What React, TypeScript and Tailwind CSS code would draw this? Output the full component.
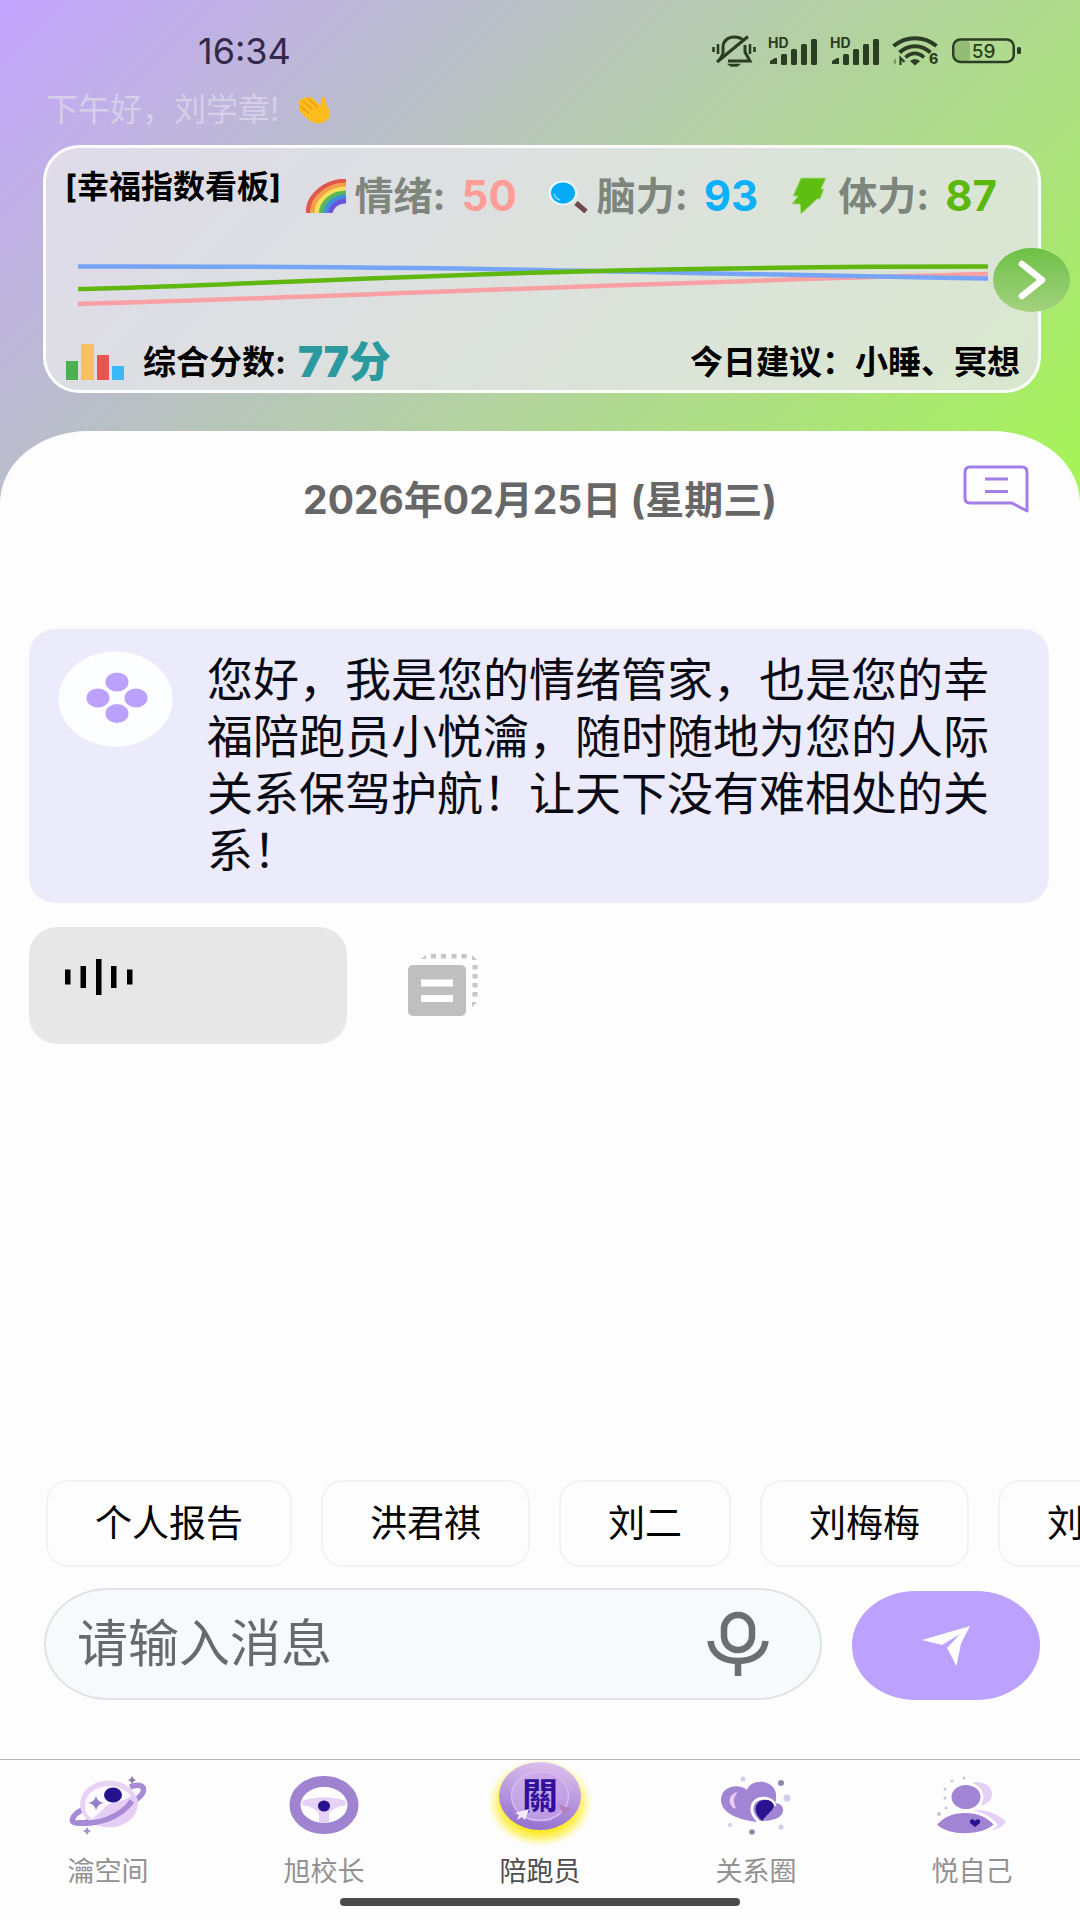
import React from "react";

const DARK = "#2b3d22";

/* ---------- status bar ---------- */

function MutedBell() {
  return (
    <svg className="h-8 w-11" viewBox="0 0 44 32" fill="none" stroke={DARK} strokeWidth="3" aria-hidden="true">
      <path d="M11 19V12C11 6 16 2 22 2c4 0 7 1 9 3M33 10v7l5 9H16" />
      <path d="M5 27 36 1.500" strokeWidth="3.200" />
      <path d="M11 19 7.500 25" />
      <path d="M17 29.500h10l-2 1.500h-6z" fill={DARK} strokeWidth="1.500" />
      <path d="M1.500 12v5M6 9v10M38 9v10M42.500 12v5" strokeWidth="2.600" />
    </svg>
  );
}

function Signal() {
  return (
    <svg className="h-9 w-[50px] overflow-visible" viewBox="0 -2 50 36" fill={DARK} aria-hidden="true">
      <path d="M2 29v-3l5-3h2v6z" />
      <rect x="13" y="19" width="6" height="11" rx="1.500" />
      <rect x="23" y="14" width="6" height="16" rx="1.500" />
      <rect x="33" y="9" width="6" height="21" rx="1.500" />
      <rect x="43" y="4" width="6" height="26" rx="1.500" />
      <text x="0" y="13" fontSize="14" fontWeight="700" fontFamily="Inter, sans-serif">HD</text>
    </svg>
  );
}

function Wifi() {
  return (
    <svg className="h-8 w-12" viewBox="0 0 48 32" fill="none" stroke={DARK} aria-hidden="true">
      <path d="M1.500 11C14 .500 32 .500 44.500 11" strokeWidth="4" />
      <path d="M7.500 17.500c9-8.500 22-8.500 31 0" strokeWidth="4" />
      <path d="M13.500 22.500c5.500-5.500 13-5.500 18.500 0" strokeWidth="3.600" />
      <path d="M18 26c3-2.500 7-2.500 10 0l-5 4.500z" fill={DARK} stroke="none" />
      <path d="M4 23v7l-3-3z" fill="#7f9b6b" stroke="none" />
      <path d="M8.500 30v-7l4 4" strokeWidth="2.200" />
      <text x="37" y="29" fontSize="14" fontWeight="800" fontFamily="Inter, sans-serif" fill={DARK} stroke="none">6</text>
    </svg>
  );
}

function Battery() {
  return (
    <svg className="h-8 w-[70px]" viewBox="0 0 70 32" aria-hidden="true">
      <rect x="3" y="6" width="15" height="20" rx="4" fill="#93bd74" />
      <rect x="1.250" y="4.500" width="60.500" height="22.500" rx="7" fill="none" stroke={DARK} strokeWidth="2.500" />
      <rect x="65" y="12" width="4" height="7" rx="1.500" fill={DARK} />
      <text x="31.500" y="22.500" fontSize="19" fontWeight="500" textAnchor="middle" fontFamily="Inter, sans-serif" fill={DARK}>59</text>
    </svg>
  );
}

function StatusBar() {
  return (
    <div className="flex h-[84px] items-center justify-between pt-[18px] pr-[58px] pl-[198px]">
      <time className="text-[36px] leading-10 text-[#33294a]">16:34</time>
      <div className="flex items-center gap-3">
        <MutedBell />
        <Signal />
        <Signal />
        <Wifi />
        <Battery />
      </div>
    </div>
  );
}

/* ---------- dashboard card ---------- */

function WavingHand() {
  return (
    <svg className="h-7 w-[34px]" viewBox="0 0 34 28" aria-hidden="true">
      <path
        d="M2 4.500C3.500 3 5 3.500 6 5L5 3.500C6 1 9 .500 11 2.500c.500-2 3.500-2 5 0l7.500 7.500.500-7c.500-2.500 4-2.500 4.500 0l1 5.500c.500 3 4 6 3.500 9.500-.500 5-6 9.500-12 9.500C13 27.500 4 17 2 13.500c-1-2 0-3.500 1.500-3.500L1.500 7.500c-.500-1 0-2 .500-3z"
        fill="#fcbc1c"
      />
      <path d="M6 5l9 8M11 2.500l9 8M3.500 10l8 7" stroke="#e59a12" strokeWidth="1.200" fill="none" strokeLinecap="round" />
    </svg>
  );
}

function Rainbow() {
  const bands = ["#e2574c", "#f6a04d", "#f8e05a", "#57b85a", "#3f8fe0", "#6a55d8"];
  return (
    <svg className="h-[34px] w-10" viewBox="0 0 40 34" fill="none" aria-hidden="true">
      {bands.map((c, i) => (
        <path
          key={c}
          d={`M${2 + i * 4.4} 34C${2 + i * 4.6} ${16 + i * 2.4} ${20 + i * 2.2} ${2 + i * 4} 40 ${2 + i * 4}`}
          stroke={c}
          strokeWidth="4.800"
        />
      ))}
    </svg>
  );
}

function Magnifier() {
  return (
    <svg className="h-[34px] w-10" viewBox="0 0 40 34" aria-hidden="true">
      <path d="M28 24l10 8.500" stroke="#6b4a48" strokeWidth="5" />
      <ellipse cx="15" cy="14" rx="14.500" ry="12.500" fill="#e8f8ff" />
      <ellipse cx="15" cy="14" rx="12" ry="10.500" fill="#03aaf8" />
      <path d="M6 15c1 3 3 5 6 6" stroke="#8bdcff" strokeWidth="1.500" fill="none" />
    </svg>
  );
}

function Bolt() {
  return (
    <svg className="h-[38px] w-10" viewBox="0 0 40 38" aria-hidden="true">
      <path d="M12 1h25l-5 11h3l-4 10h-3L12 37l-1-10H3l6-8H4z" fill="#5fbe12" stroke="#a5dc7c" strokeWidth="1" strokeLinejoin="round" />
    </svg>
  );
}

const metrics = [
  { icon: <Rainbow />, label: "情绪:", value: 50, color: "text-[#ff9d99]" },
  { icon: <Magnifier />, label: "脑力:", value: 93, color: "text-[#0db1fb]" },
  { icon: <Bolt />, label: "体力:", value: 87, color: "text-[#5cb80e]" },
];

function TrendChart() {
  return (
    <svg className="mt-[39px] h-[54px] w-full" viewBox="0 0 910 54" preserveAspectRatio="none" fill="none" strokeWidth="4.500" role="img" aria-label="趋势">
      <path d="M0 47C200 42 600 24 910 17" stroke="#f8a0a4" />
      <path d="M0 9.500C350 9 500 14 700 17.500S850 21 910 21.500" stroke="#76a4f6" />
      <path d="M0 32C200 28 420 9.500 910 9.500" stroke="#60b70f" />
    </svg>
  );
}

function Dashboard() {
  return (
    <section className="relative mt-[15px] mr-[39px] ml-[43px] h-[248px] rounded-[36px] border-[3px] border-white/90 bg-[#e6e6ea]/80 text-black">
      <div className="flex items-start justify-between pr-[41px] pl-[19px]">
        <h2 className="mt-[19px] text-[32px] leading-10 font-bold whitespace-nowrap">[幸福指数看板]</h2>
        <dl className="mt-[26px] flex gap-[31px] leading-[44px]">
          {metrics.map((m) => (
            <div key={m.label} className="flex items-center">
              {m.icon}
              <dt className="ml-[9px] text-[39px] font-bold text-[#7d857c]">{m.label}</dt>
              <dd className={`ml-4 text-[42px] font-bold ${m.color}`}>{m.value}</dd>
            </div>
          ))}
        </dl>
      </div>
      <div className="pr-[50px] pl-8">
        <TrendChart />
      </div>
      <div className="absolute inset-x-0 bottom-1 flex items-center pr-[18px] pl-5 text-[33px] leading-[48px] font-bold">
        <svg className="h-9 w-[60px]" viewBox="0 0 60 36" aria-hidden="true">
          <rect x="0" y="17" width="12" height="19" fill="#4caf50" />
          <rect x="15" y="0" width="13" height="36" fill="#f8c060" />
          <rect x="31" y="11" width="12" height="25" fill="#e55751" />
          <rect x="46" y="22" width="12" height="14" fill="#3bb9f8" />
        </svg>
        <span className="ml-[17px]">综合分数:</span>
        <strong className="ml-3 text-[42px] text-[#2b9a9f]">77分</strong>
        <span className="ml-auto">今日建议：小睡、冥想</span>
      </div>
      <button
        type="button"
        aria-label="查看详情"
        className="absolute top-[100px] -right-8 flex h-16 w-[77px] items-center justify-center rounded-[50%] bg-linear-to-b from-[#6cc044] to-[#a3d17e]"
      >
        <svg className="h-10 w-8" viewBox="0 0 32 40" fill="none" stroke="#fff" strokeWidth="6.500" strokeLinecap="round" strokeLinejoin="round">
          <path d="M6 4l20 16L6 36" />
        </svg>
      </button>
    </section>
  );
}

/* ---------- conversation ---------- */

function Avatar() {
  return (
    <svg className="h-24 w-[115px] shrink-0" viewBox="0 0 115 96" aria-hidden="true">
      <ellipse cx="57.500" cy="48" rx="57" ry="47.500" fill="#fdfeff" />
      <g fill="#bba1fb">
        <ellipse cx="59" cy="31" rx="11.500" ry="9.500" />
        <ellipse cx="40" cy="47" rx="11.500" ry="9.500" />
        <ellipse cx="78" cy="47" rx="11.500" ry="9.500" />
        <ellipse cx="59" cy="62.500" rx="11.500" ry="9.500" />
      </g>
    </svg>
  );
}

function Conversation() {
  return (
    <main className="flex flex-1 flex-col px-[29px]">
      <article className="mt-[109px] mr-[2px] flex items-start rounded-[26px] bg-[#ebebfc] pt-[22px] pr-[52px] pb-6 pl-[29px]">
        <Avatar />
        <p className="ml-[34px] text-[46px] leading-[57px] text-[#0a0a14]">
          您好，我是您的情绪管家，也是您的幸福陪跑员小悦瀹，随时随地为您的人际关系保驾护航！让天下没有难相处的关系！
        </p>
      </article>
      <div className="mt-6 flex items-start">
        <button type="button" aria-label="播放语音" className="flex h-[117px] w-[318px] items-start rounded-[28px] bg-[#e7e7e7] pt-8 pl-9">
          <svg className="h-9 w-[68px]" viewBox="0 0 68 36" fill="#000">
            <rect x="0" y="10.500" width="5.500" height="15" />
            <rect x="15.500" y="7" width="5.500" height="22" />
            <rect x="31" y="0" width="5.500" height="36" />
            <rect x="46" y="7" width="5.500" height="22" />
            <rect x="62" y="10.500" width="5.500" height="15" />
          </svg>
        </button>
        <button type="button" aria-label="转为文字" className="mt-[26px] ml-[60px]">
          <svg className="h-16 w-[72px]" viewBox="0 0 72 64">
            <rect x="1" y="12" width="58" height="51" rx="5" fill="#bfbfbf" />
            <rect x="14" y="26.500" width="32" height="7" fill="#fff" />
            <rect x="14" y="42" width="32" height="7" fill="#fff" />
            <g fill="#c6c6c6">
              <path d="M14 6l5-4v4zM65 2l5 5h-5zM65 49h5l-5 5z" />
              <rect x="24" y="1" width="5" height="4.500" />
              <rect x="34" y="1" width="5" height="4.500" />
              <rect x="44.500" y="1" width="5" height="4.500" />
              <rect x="54.500" y="1" width="5" height="4.500" />
              <rect x="65.500" y="12" width="5" height="4.500" />
              <rect x="65.500" y="21" width="5" height="4.500" />
              <rect x="65.500" y="30" width="5" height="4.500" />
              <rect x="65.500" y="39" width="5" height="4.500" />
            </g>
          </svg>
        </button>
      </div>
    </main>
  );
}

const quickReplies = ["个人报告", "洪君祺", "刘二", "刘梅梅", "刘二"];

function Composer() {
  return (
    <form className="mt-[21px] mr-10 mb-[59px] ml-11 flex items-end" onSubmit={(e) => e.preventDefault()}>
      <div className="flex h-28 min-w-0 flex-1 items-center rounded-[64px/56px] border-2 border-[#e0e3e5] bg-[#f6fafb] pr-[51px] pl-[31px]">
        <input
          type="text"
          aria-label="请输入消息"
          placeholder="请输入消息"
          className="min-w-0 flex-1 bg-transparent text-[51px] leading-[72px] outline-none placeholder:text-[#666a6b]"
        />
        <button type="button" aria-label="语音输入">
          <svg className="h-[66px] w-[62px]" viewBox="0 0 62 66" fill="none" stroke="#6b6f6f" strokeWidth="6.500">
            <rect x="17" y="4" width="28" height="35" rx="14" />
            <path d="M3.500 30C5 43 16 50 31 50S57 43 58.500 30M31 50v15" />
          </svg>
        </button>
      </div>
      <button
        type="submit"
        aria-label="发送"
        className="ml-[30px] flex h-[109px] w-[188px] items-center justify-center rounded-[64px/54px] bg-[#bca2fe]"
      >
        <svg className="h-10 w-12" viewBox="0 0 48 40" fill="#fff">
          <path d="M0 14 48 0 39 17.500 34.500 40 25 22 38 8 20 19z" />
        </svg>
      </button>
    </form>
  );
}

/* ---------- bottom navigation ---------- */

function PlanetIcon() {
  return (
    <svg className="h-[92px] w-[108px]" viewBox="0 0 108 92" aria-hidden="true">
      <path d="M28 50C18 55 15 63 23 63c5 0 12-1 18-3M76 27c9-4 17-1 12 7-2 3-5 5-9 8" fill="none" stroke="#a68ad6" strokeWidth="5.500" />
      <ellipse cx="55" cy="44" rx="29" ry="23.500" fill="#e9d3f5" />
      <path d="M31 46c0-12 10-19 23-20 13 0 21 6 25 13L51 48 38 59c-4-3-7-7-7-13z" fill="#fdfaff" />
      <path d="M46 55c4-9 10-13 17-13 6-1 11-4 16-7l5 6c-2 15-13 26-28 26-6 0-11-4-10-12z" fill="#e6cdf5" />
      <path d="M24 63c20 2 43-6 54-22" fill="none" stroke="#a68ad6" strokeWidth="5.500" />
      <ellipse cx="59" cy="35" rx="9" ry="7.500" fill="#26128e" />
      <path d="M42 36q1.500 6 8 7-6.500 1-8 7-1.500-6-8-7 6.500-1 8-7z" fill="#957fc8" />
      <path d="M78 16q1 3 4 4-3 1-4 4-1-3-4-4 3-1 4-4z" fill="#8d82a8" />
      <path d="M33 67q1 3 4 4-3 1-4 4-1-3-4-4 3-1 4-4z" fill="#a294cf" />
    </svg>
  );
}

function WheelIcon() {
  return (
    <svg className="h-[92px] w-[108px]" viewBox="0 0 108 92" aria-hidden="true">
      <ellipse cx="54" cy="45" rx="29" ry="23.500" fill="#fff" stroke="#9f83d0" strokeWidth="11" />
      <path d="M32 41c14-5 30-5 44 0v4c-10 2-16 5-17 10v8H49v-8c-1-5-7-8-17-10z" fill="#e6d2f6" />
      <ellipse cx="54" cy="46" rx="6" ry="5.500" fill="#26128e" />
    </svg>
  );
}

function CompanionIcon() {
  return (
    <svg className="h-[92px] w-[108px]" viewBox="0 0 108 92" aria-hidden="true">
      <defs>
        <radialGradient id="glow">
          <stop offset="65%" stopColor="#fbe92e" />
          <stop offset="80%" stopColor="#fdf15c" stopOpacity=".75" />
          <stop offset="100%" stopColor="#fffbd0" stopOpacity="0" />
        </radialGradient>
        <linearGradient id="disc" x1=".6" y1="0" x2=".4" y2="1">
          <stop offset="0" stopColor="#dcc0ec" />
          <stop offset="1" stopColor="#9370cf" />
        </linearGradient>
        <linearGradient id="face" x1=".3" y1="0" x2=".7" y2="1">
          <stop offset="0" stopColor="#cdaeea" />
          <stop offset="1" stopColor="#bb98e2" />
        </linearGradient>
      </defs>
      <ellipse cx="54" cy="43" rx="54" ry="45" fill="url(#glow)" />
      <ellipse cx="54" cy="36" rx="41" ry="34" fill="url(#disc)" />
      <ellipse cx="54" cy="36" rx="28.500" ry="24.500" fill="url(#face)" stroke="#d7bcf2" strokeWidth="1.500" />
      <path d="M72 43l12 6-6 7z" fill="#b283bd" />
      <text x="54" y="49" fontSize="36" fontWeight="700" textAnchor="middle" fontFamily="'Noto Sans CJK TC', sans-serif" fill="#30109a">關</text>
      <path d="M43 49 29 53l4 2-2 5 5-3 3 3z" fill="#f8ebfb" />
    </svg>
  );
}

function CircleIcon() {
  return (
    <svg className="h-[92px] w-[108px]" viewBox="0 0 108 92" aria-hidden="true">
      <path d="M55 62C37 60 19 53 19 40c0-14 18-17 26-10 4-13 31-11 29 8 0 9-8 20-19 24z" fill="#a184d4" />
      <path d="M59 61c9 0 22-2 22-11 0-7-9-9-13-4z" fill="#a184d4" />
      <path d="M57 62C49 54 49 49 51 44c4-8 19-8 22 2" fill="none" stroke="#fff" strokeWidth="3" />
      <path d="M60 61c-6-6-7-11-6-15 3-8 15-8 18-1 0 5-7 9-12 16z" fill="#29138f" />
      <path d="M33 34c-6 3-6 10 0 14-3-5-3-9 0-14z" fill="#f0d6f5" stroke="#e7cbf1" strokeWidth="2" />
      <g fill="#d3cbeb">
        <circle cx="41" cy="19" r="2.500" />
        <circle cx="85" cy="38" r="3.500" />
        <circle cx="28" cy="65" r="2" />
        <circle cx="79" cy="67" r="2.500" />
      </g>
      <g fill="#9286ad">
        <circle cx="79" cy="23" r="3" />
        <circle cx="50" cy="72" r="2.800" />
      </g>
    </svg>
  );
}

function SelfIcon() {
  return (
    <svg className="h-[92px] w-[108px]" viewBox="0 0 108 92" aria-hidden="true">
      <ellipse cx="59" cy="34" rx="15" ry="12" fill="#e6cff4" />
      <path d="M44 54c12-8 34-3 44 8-3 4-8 7-14 8z" fill="#e6cff4" />
      <ellipse cx="48" cy="37" rx="16" ry="13.500" fill="#a184d4" stroke="#fff" strokeWidth="3" />
      <path d="M17 65c14-18 46-18 61 0-15 13-47 13-61 0z" fill="#a184d4" stroke="#fff" strokeWidth="3" />
      <path d="M57 67l-5-4c-1-4 3-5 5-2 2-3 6-2 5 2z" fill="#29138f" />
      <g fill="#c9c2d8">
        <circle cx="34" cy="21" r="1.500" />
        <circle cx="46" cy="18" r="1.500" />
        <circle cx="27" cy="29" r="1.500" />
        <circle cx="27" cy="38" r="1.500" />
        <circle cx="28" cy="48" r="1.500" />
        <circle cx="21" cy="54" r="2" />
      </g>
    </svg>
  );
}

const tabs = [
  { label: "瀹空间", icon: <PlanetIcon /> },
  { label: "旭校长", icon: <WheelIcon /> },
  { label: "陪跑员", icon: <CompanionIcon />, active: true },
  { label: "关系圈", icon: <CircleIcon /> },
  { label: "悦自己", icon: <SelfIcon /> },
];

function BottomNav() {
  return (
    <footer className="border-t border-[#b3b3b3]">
      <nav className="grid grid-cols-5">
        {tabs.map((t) => (
          <a
            key={t.label}
            href="#"
            aria-current={t.active ? "page" : undefined}
            className={`flex flex-col items-center text-[27px] leading-10 ${t.active ? "text-[#4d4d4d]" : "text-[#929292]"}`}
          >
            {t.icon}
            {t.label}
          </a>
        ))}
      </nav>
      <div className="mx-auto mt-[6px] mb-[14px] h-2 w-[37%] rounded-full bg-[#4a4a4a]" />
    </footer>
  );
}

export default function App() {
  return (
    <div className="flex min-h-screen flex-col overflow-x-hidden bg-[#fdfdfd] bg-[linear-gradient(135deg,#c4a5ff,#a5f653)] bg-[length:100%_520px] bg-no-repeat font-['Inter','Noto_Sans_CJK_SC',sans-serif]">
      <header>
        <StatusBar />
        <div className="mt-[6px] ml-[46px] flex items-center text-[32px] leading-10 text-[#d5cfe8]">
          <span>下午好，刘学章!</span>
          <span className="ml-[18px]">
            <WavingHand />
          </span>
        </div>
        <Dashboard />
      </header>

      <div className="mt-[38px] flex flex-1 flex-col rounded-t-[88px_72px] bg-[#fdfdfd]">
        <div className="grid grid-cols-[1fr_auto_1fr] pt-[34px] pr-[51px] pl-[51px]">
          <h1 className="col-start-2 mt-[15px] text-[39px] leading-10 font-bold text-[#676767]">2026年02月25日 (星期三)</h1>
          <button type="button" aria-label="消息" className="self-start justify-self-end">
            <svg className="h-12 w-[66px]" viewBox="0 0 66 48" fill="none" stroke="#a27fe8" strokeWidth="3" strokeLinejoin="round">
              <path d="M7 2h52q5 0 5 5v39l-15-8H7q-5 0-5-5V7q0-5 5-5z" />
              <path d="M22 14h23M22 26.500h23" />
            </svg>
          </button>
        </div>

        <Conversation />

        <div className="flex gap-[29px] overflow-hidden pl-[46px]">
          {quickReplies.map((name, i) => (
            <button
              key={i}
              type="button"
              className="h-[87px] shrink-0 rounded-[22px] border-2 border-[#f2f2f2] px-[47px] text-[37px] whitespace-nowrap text-black"
            >
              {name}
            </button>
          ))}
        </div>
        <Composer />
        <BottomNav />
      </div>
    </div>
  );
}
